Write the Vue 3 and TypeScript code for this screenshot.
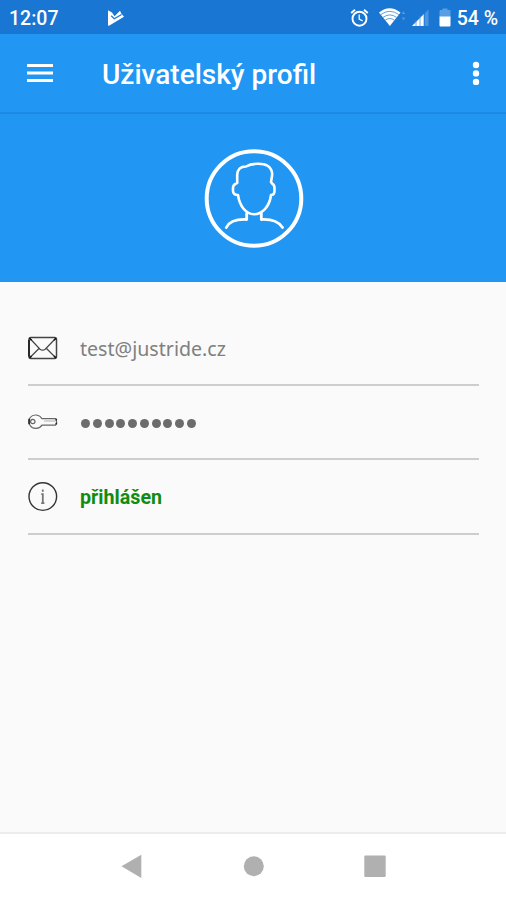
<script setup lang="ts">
const title: string = 'Uživatelský profil'
const email: string = 'test@justride.cz'
const status: string = 'přihlášen'
const passwordLength: number = 10
</script>

<template>
  <div class="screen">
    <header class="status-bar">
      <span class="time">12:07</span>
      <svg class="play" width="18" height="18" viewBox="0 0 18 18">
        <path d="M1 1.2 5 3.5 7.5 7.2 13 1.8 14.3 4.6 17 7.8 2 16.8Q1 17 1 16Z" fill="#fff" />
        <path d="M4.2 6.8 7.3 9.8 14.6 5.4" fill="none" stroke="#1976d2" stroke-width="1.2" />
      </svg>
      <div class="indicators">
        <svg width="20" height="20" viewBox="0 0 20 20" fill="none" stroke="#fff" stroke-width="1.9">
          <circle cx="9.5" cy="10.7" r="7" />
          <path d="M1.2 4.9 5 1.8M14 1.8l3.8 3.1" />
          <path d="M9.2 6.5v4.5l3.5 2" stroke-width="1.3" />
        </svg>
        <svg class="wifi" width="28" height="20" viewBox="0 0 28 20">
          <path d="M0 4.5Q10.5 -4 21.5 4.5L10.9 18Z" fill="#fff" />
          <path d="M1.8 6.6Q10.7 0 19.8 6.6M4 9.4Q10.8 4.4 17.6 9.4M6.2 12.2Q10.8 8.9 15.4 12.2" fill="none" stroke="#1976d2" stroke-width=".7" />
          <path d="m22.5 6 2-3 2 3Zm0 3.5h4l-2 3Z" fill="#4a95df" />
        </svg>
        <svg class="signal" width="18" height="20" viewBox="0 0 18 20">
          <path d="M0 18 12 6v12Z" fill="#fff" />
          <path d="M13 18V5l3.5-3.5V18Z" fill="#4a95df" />
          <path d="M4 12v6M8 8v10M12 6v12" stroke="#4a95df" stroke-width=".8" />
        </svg>
        <svg class="battery" width="12" height="20" viewBox="0 0 12 20">
          <path d="M.5 3q0-1 1-1H3.5V.5h5V2h2q1 0 1 1v6H.5Z" fill="#5a9fe2" />
          <path d="M.5 8.5h11v9q0 1-1 1h-9q-1 0-1-1Z" fill="#fff" />
        </svg>
        <span class="percent">54 %</span>
      </div>
    </header>

    <nav class="toolbar">
      <svg class="menu" width="26" height="20" viewBox="0 0 26 20">
        <path d="M0 2.5h26M0 10h26M0 17.5h26" stroke="#fff" stroke-width="3.2" />
      </svg>
      <h1>{{ title }}</h1>
      <svg class="more" width="8" height="26" viewBox="0 0 8 26" fill="#fff">
        <circle cx="4" cy="5" r="3.2" /><circle cx="4" cy="13.4" r="3.2" /><circle cx="4" cy="21.9" r="3.2" />
      </svg>
    </nav>

    <section class="hero">
      <svg width="100" height="100" viewBox="0 0 100 100" fill="none" stroke="#fff" stroke-linecap="round" stroke-linejoin="round">
        <circle cx="50" cy="49.5" r="47.3" stroke-width="4" />
        <path d="M33.2 34V26Q33.5 17.5 42 17.5C48 14 59 14 64 17Q69 21 68 27L67 33L68.5 35Q70.5 36 70.5 39V42Q70.5 46 67 46C65.5 58 58 65.2 50 65.2C42 65.2 35.5 57 34 46Q29.2 46 29 42V39Q29 36 31.5 35Z" stroke-width="2.6" />
        <path d="M42.7 64.5v6C32 70 25 73 22.3 78.5M57.3 64.5v6C68 70 75 73 78.5 78.5" stroke-width="2.8" />
      </svg>
    </section>

    <main class="details">
      <div class="row">
        <svg class="icon" width="30" height="30" viewBox="0 0 30 30" fill="none" stroke="#444" stroke-width="1.2">
          <rect x="1" y="4.6" width="27.5" height="21" rx="2" stroke-width="1.5" />
          <path d="m1.5 5 10.5 11.2q2.5 2 5.2 0L28 5M1.5 25l9.5-9.5M28 25l-9.5-9.5" />
          <path d="M1 7v16.5M1.5 5.2l2 2M28 5.2l-2 2M1.5 25l2-2M28 25l-2-2" stroke="#111" stroke-width="1.5" />
        </svg>
        <span class="email">{{ email }}</span>
      </div>
      <div class="row">
        <svg class="icon key" width="30" height="30" viewBox="0 0 30 30" fill="none" stroke="#666" stroke-width="1.2">
          <path d="M14 11.7C11.5 7.2 5 6.8 2.2 10.5Q-.5 15 2.2 18.5C5 22.8 11.5 22 14 18.2h13.5l1.2-2.2-.8-4.3Z" />
          <path d="M16 14h11" stroke="#bbb" />
          <circle cx="4.8" cy="14.5" r="2.2" />
          <path d="M1.1 11.8v5.4M28.3 12v1.6M28.3 15.8v1.6" stroke="#222" stroke-width="1.5" />
        </svg>
        <span class="password">
          <i v-for="n in passwordLength" :key="n" class="dot"></i>
        </span>
      </div>
      <div class="row">
        <svg class="icon" width="30" height="30" viewBox="0 0 30 30" fill="none">
          <circle cx="14.8" cy="14.6" r="13.8" stroke="#333" stroke-width="1.4" />
          <path d="M14.8 7.6v2.2M13.2 12.2h1.6v9M13.2 21.2h3.2" stroke="#777" stroke-width="1.8" />
        </svg>
        <span class="signed-in">{{ status }}</span>
      </div>
    </main>

    <footer class="nav-bar">
      <svg width="22" height="26" viewBox="0 0 22 26"><path d="M.5 13.3 20.3 1.7v23.2Z" fill="#b0b0b0" /></svg>
      <svg width="22" height="26" viewBox="0 0 22 26"><circle cx="11.8" cy="13.3" r="10" fill="#b0b0b0" /></svg>
      <svg width="22" height="26" viewBox="0 0 22 26"><rect x=".3" y="2.5" width="21.4" height="21.5" rx="1" fill="#b0b0b0" /></svg>
    </footer>
  </div>
</template>

<style>
body {
  margin: 0;
}
</style>

<style scoped>
.screen {
  display: flex;
  flex-direction: column;
  width: 506px;
  height: 900px;
  overflow: hidden;
  background: #fafafa;
  font-family: Roboto, sans-serif;
}
svg {
  display: block;
  flex: none;
}
.status-bar {
  display: flex;
  align-items: center;
  box-sizing: border-box;
  height: 34px;
  padding: 2px 8px 0 9px;
  background: #1976d2;
  color: #fff;
  font-size: 19.5px;
  font-weight: 500;
  line-height: 32px;
  white-space: nowrap;
}
.time {
  width: 98px;
  padding-top: 1px;
}
.play {
  margin-top: -1px;
}
.indicators {
  display: flex;
  align-items: center;
  margin-left: auto;
}
.wifi {
  margin-left: 9px;
}
.signal {
  margin-left: 5px;
}
.battery {
  margin-left: 9px;
}
.percent {
  margin-left: 6px;
  padding-top: 1px;
}
.toolbar {
  display: flex;
  align-items: center;
  box-sizing: border-box;
  height: 80px;
  padding: 0 26px 0 27px;
  border-bottom: 2px solid #1e88e5;
  background: #2196f3;
  color: #fff;
}
h1 {
  margin: 3px 0 0 49px;
  font-size: 28px;
  font-weight: 500;
  line-height: 36px;
  white-space: nowrap;
}
.more {
  margin-left: auto;
}
.hero {
  display: flex;
  justify-content: center;
  box-sizing: border-box;
  height: 168px;
  padding: 35px 0 0 2px;
  background: #2196f3;
}
.details {
  flex: 1;
  padding: 29px 27px 0 28px;
}
.row {
  display: flex;
  align-items: center;
  box-sizing: border-box;
  height: 74.5px;
  padding-top: 2px;
  border-bottom: 2px solid #cdcdcd;
}
.icon {
  margin-right: 22px;
}
.key {
  margin-top: -1px;
}
.email {
  color: #808080;
  font-family: "Noto Sans", sans-serif;
  font-size: 19.6px;
}
.password {
  display: flex;
  gap: 2.75px;
  padding: 1px 0 0 1px;
}
.dot {
  width: 9px;
  height: 9px;
  border-radius: 50%;
  background: #6c6c6c;
}
.signed-in {
  color: #118c11;
  font-size: 19.7px;
  font-weight: 700;
}
.nav-bar {
  display: flex;
  justify-content: center;
  gap: 99.5px;
  box-sizing: border-box;
  height: 68px;
  padding-top: 19px;
  border-top: 2px solid #ececec;
  background: #fff;
}
</style>
